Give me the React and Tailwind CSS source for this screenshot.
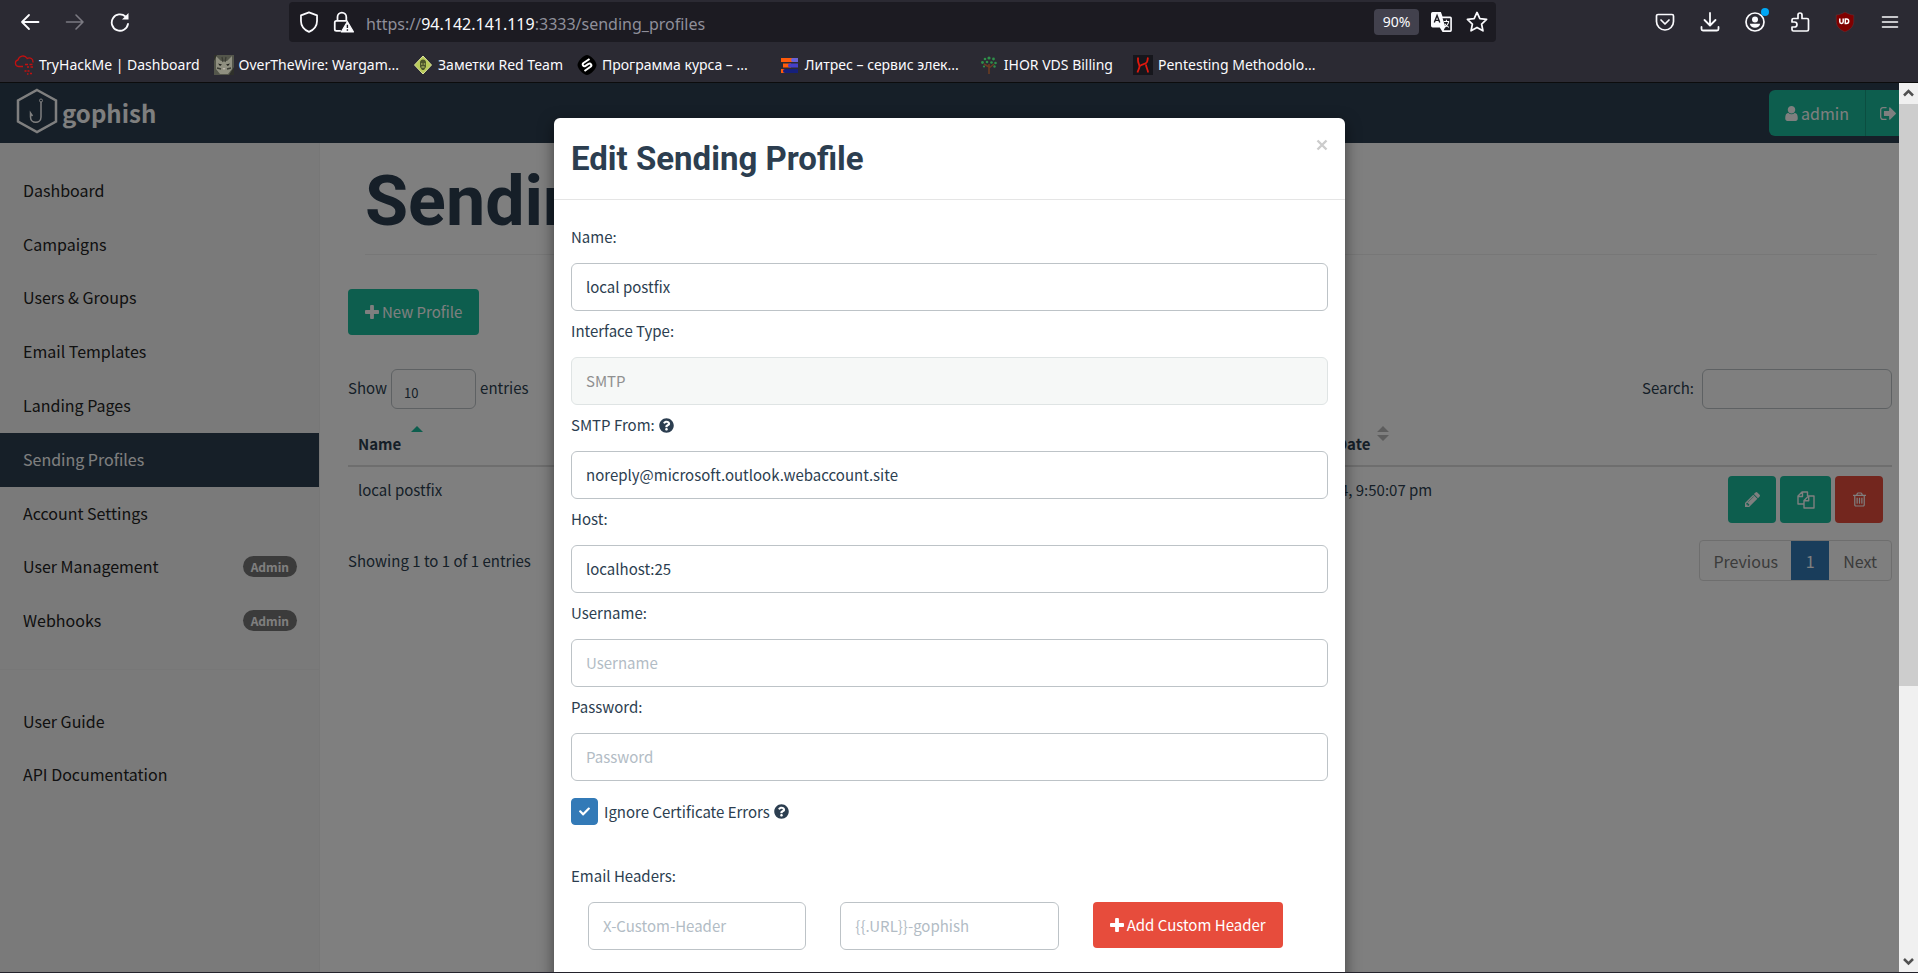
import React, { useState } from "react";
import { FaQuestionCircle, FaCheck } from "react-icons/fa";

const bookmarks = [
    { title: "TryHackMe | Dashboard", icon: CloudIcon, margin: "mr-3.5" },
    { title: "OverTheWire: Wargam...", icon: CatIcon, margin: "mr-3.5" },
    { title: "Заметки Red Team", icon: DiamondIcon, margin: "mr-3.5" },
    { title: "Программа курса – ...", icon: SkillIcon, margin: "mr-8" },
    { title: "Литрес – сервис элек...", icon: BooksIcon, margin: "mr-5" },
    { title: "IHOR VDS Billing", icon: TreeIcon, margin: "mr-5" },
    { title: "Pentesting Methodolo...", icon: HelixIcon, margin: "" },
];

const navItems = [
    { label: "Dashboard" },
    { label: "Campaigns" },
    { label: "Users & Groups" },
    { label: "Email Templates" },
    { label: "Landing Pages" },
    { label: "Sending Profiles", active: true },
    { label: "Account Settings" },
    { label: "User Management", admin: true },
    { label: "Webhooks", admin: true },
];

function CloudIcon() {
    return (
        <svg viewBox="0 0 20 20" className="h-5 w-5" fill="none" stroke="#c11111" strokeWidth="1.3">
            <path d="M9 11.500H4.500A3.300 3.300 0 0 1 4 5 5 5 0 0 1 13.200 3.500 3.700 3.700 0 0 1 18.800 7.500" />
            <path d="M11 9.500h3M15.500 9.500h3M13 12h2M16.500 12h2.500M10.500 16h2M13.500 16h2M13 19h1.500M16 18.500h2" strokeWidth="1.5" />
        </svg>
    );
}

function CatIcon() {
    return (
        <svg viewBox="0 0 20 20" className="h-5 w-5">
            <rect width="20" height="20" fill="#54564b" />
            <path d="M2 1l5 5h6l5-5v13l-4 5H6l-4-5z" fill="#8f8f80" />
            <path d="M8 2l1 5M12 2l-1 5M3 13l4 1M17 13l-4 1" stroke="#3b3c35" strokeWidth="1.3" />
            <path d="M4 8.500l4 1-2 1.500zM16 8.500l-4 1 2 1.500z" fill="#1f201c" />
            <path d="M8.500 13h3l-1.500 2z" fill="#c0b9ae" />
            <path d="M0 0h3L0 6zM20 12v8h-5z" fill="#2f302a" />
        </svg>
    );
}

function DiamondIcon() {
    return (
        <svg viewBox="0 0 20 20" className="h-5 w-5">
            <path d="M10 1l8.500 9-8.500 9-8.500-9z" fill="#b9cb5a" stroke="#dbe39b" />
            <path d="M7 6.500a3.300 3.300 0 0 1 6 0V12l-2 3H9l-2-3z" fill="#4c552b" />
            <path d="M8 9h1.500M10.700 9h1.500M8.500 12h3" stroke="#c9d778" />
        </svg>
    );
}

function SkillIcon() {
    return (
        <svg viewBox="0 0 20 20" className="h-5 w-5">
            <path d="M10 0c3 0 9.500 6 9.500 10S13 20 10 20 .5 14 .5 10 7 0 10 0z" fill="#000" />
            <path
                d="M12.500 4L6.500 8c-2 1.500 0 4 2 2.800l3-1.900c2-1.200 4 1.300 2 2.900L7.500 16"
                fill="none"
                stroke="#fff"
                strokeWidth="2"
            />
        </svg>
    );
}

function BooksIcon() {
    return (
        <svg viewBox="0 0 20 20" className="h-5 w-5">
            <path d="M1 3h12v4H1z" fill="#ff5a0a" />
            <path d="M13 3h5v4h-5a2 2 0 0 1 0-4z" fill="#6a62d8" />
            <path d="M3 8.500h8v4H3z" fill="#ff5a0a" />
            <path d="M10 8.500h8v4h-8a2 2 0 0 1 0-4z" fill="#4640c8" />
            <path d="M1 14h5v4H1z" fill="#ff5a0a" />
            <path d="M5 14h13v4H5a2 2 0 0 1 0-4z" fill="#15207c" />
        </svg>
    );
}

function TreeIcon() {
    return (
        <svg viewBox="0 0 20 20" className="h-5 w-5">
            <path d="M10 19V9M10 13l5-4M10 12L5 9" stroke="#6b3c22" strokeWidth="1.6" fill="none" />
            <g fill="#2f8f4a">
                <circle cx="10" cy="3" r="1.6" />
                <circle cx="6" cy="4" r="1.3" />
                <circle cx="14.500" cy="4" r="1.4" />
                <circle cx="3.500" cy="7.500" r="1.4" />
                <circle cx="16.500" cy="8" r="1.3" />
                <circle cx="8" cy="7" r="1.3" />
                <circle cx="12.500" cy="7.500" r="1.3" />
                <circle cx="5" cy="11.500" r="1.1" />
                <circle cx="15.500" cy="11.500" r="1.2" />
            </g>
        </svg>
    );
}

function HelixIcon() {
    return (
        <svg viewBox="0 0 20 20" className="h-5 w-5">
            <rect width="20" height="20" fill="#16161c" />
            <path
                d="M5 2.500v3c0 2.500 1.500 4 1.500 6S5 15 4.500 17.500M7 11c2-2.500 6-1.500 7-4 .8-2 .5-3 1-4.500M13 9.500c0 3 2 5 2 8"
                fill="none"
                stroke="#e0180e"
                strokeWidth="1.8"
            />
        </svg>
    );
}

function PlusIcon() {
    return (
        <svg viewBox="192 128 1408 1408" className="h-[14px] w-[14px]" fill="currentColor">
            <path d="M1600 736v192q0 40-28 68t-68 28h-416v416q0 40-28 68t-68 28H800q-40 0-68-28t-28-68v-416H288q-40 0-68-28t-28-68V736q0-40 28-68t68-28h416V224q0-40 28-68t68-28h192q40 0 68 28t28 68v416h416q40 0 68 28t28 68z" />
        </svg>
    );
}

function UserIcon() {
    return (
        <svg viewBox="256 128 1280 1536" className="h-[15px] w-[13px]" fill="currentColor">
            <path d="M1536 1399q0 109-62.500 187t-150.500 78h-854q-88 0-150.500-78T256 1399q0-85 8.500-160.500t31.500-152 58.500-131 94-89T583 832q131 128 313 128t313-128q76 0 134.500 34.500t94 89 58.500 131 31.500 152 8.500 160.500zM1280 512q0 159-112.500 271.500T896 896 624.500 783.500 512 512t112.500-271.500T896 128t271.500 112.500T1280 512z" />
        </svg>
    );
}

function SignOutIcon() {
    return (
        <svg viewBox="64 256 1568 1280" className="h-[13px] w-4" fill="currentColor">
            <path d="M704 1440q0 4 1 20t.5 26.500-3 23.500-10 19.500T672 1536H352q-119 0-203.500-84.500T64 1248V544q0-119 84.500-203.500T352 256h320q13 0 22.500 9.500T704 288q0 4 1 20t.5 26.500-3 23.500-10 19.500T672 384H352q-66 0-113 47t-47 113v704q0 66 47 113t113 47h312l11.500 1 11.500 3 8 5.500 7 9 2 13.500zm928-544q0 26-19 45l-544 544q-19 19-45 19t-45-19-19-45v-288H512q-26 0-45-19t-19-45V704q0-26 19-45t45-19h448V352q0-26 19-45t45-19 45 19l544 544q19 19 19 45z" />
        </svg>
    );
}

function PencilIcon() {
    return (
        <svg viewBox="128 149 1515 1515" className="h-[15px] w-[15px]" fill="currentColor">
            <path d="M491 1536l91-91-235-235-91 91v107h128v128h107zm523-928q0-22-22-22-10 0-17 7l-542 542q-7 7-7 17 0 22 22 22 10 0 17-7l542-542q7-7 7-17zm-54-192l416 416-832 832H128v-416zm683 96q0 53-37 90l-166 166-416-416 166-165q36-38 90-38 53 0 91 38l235 234q37 39 37 91z" />
        </svg>
    );
}

function CopyIcon() {
    return (
        <svg viewBox="0 0 18 18" className="h-[18px] w-[18px]" fill="none" stroke="currentColor" strokeWidth="1.4" strokeLinejoin="round">
            <path d="M7 13H1V5l4-4h5.500v4M1 5.500h4.500V1M7 17V9.500L11.500 5H17v12zM7 9.800h4.700V5" />
        </svg>
    );
}

function TrashIcon() {
    return (
        <svg viewBox="192 128 1408 1536" className="h-[15px] w-[13px]" fill="currentColor">
            <path d="M704 736v576q0 14-9 23t-23 9h-64q-14 0-23-9t-9-23V736q0-14 9-23t23-9h64q14 0 23 9t9 23zm256 0v576q0 14-9 23t-23 9h-64q-14 0-23-9t-9-23V736q0-14 9-23t23-9h64q14 0 23 9t9 23zm256 0v576q0 14-9 23t-23 9h-64q-14 0-23-9t-9-23V736q0-14 9-23t23-9h64q14 0 23 9t9 23zm128 724V512H448v948q0 22 7 40.500t14.500 27 10.500 8.500h832q3 0 10.500-8.500t14.500-27 7-40.500zM672 384h448l-48-117q-7-9-17-11H738q-10 2-17 11zm928 32v64q0 14-9 23t-23 9h-96v948q0 83-47 143.500t-113 60.500H480q-66 0-113-58.500T320 1464V512h-96q-14 0-23-9t-9-23v-64q0-14 9-23t23-9h309l70-167q15-37 54-63t79-26h320q40 0 79 26t54 63l70 167h309q14 0 23 9t9 23z" />
        </svg>
    );
}

function BrowserToolbar() {
    return (
        <div className="flex h-11 items-center">
            <div className="flex w-[289px] shrink-0 items-center gap-[25px] pl-5">
                <button type="button" aria-label="Back" className="text-[#fbfbfe]">
                    <svg viewBox="0 0 20 20" className="h-5 w-5" fill="none" stroke="currentColor" strokeWidth="1.8" strokeLinecap="round" strokeLinejoin="round">
                        <path d="M18.500 10H2M9 3l-7 7 7 7" />
                    </svg>
                </button>
                <button type="button" aria-label="Forward" className="text-[#7b7a82]">
                    <svg viewBox="0 0 20 20" className="h-5 w-5" fill="none" stroke="currentColor" strokeWidth="1.6" strokeLinecap="round" strokeLinejoin="round">
                        <path d="M1.500 10H18M11 3l7 7-7 7" />
                    </svg>
                </button>
                <button type="button" aria-label="Reload" className="text-[#fbfbfe]">
                    <svg viewBox="0 0 20 20" className="h-5 w-5" fill="none" stroke="currentColor" strokeWidth="1.8" strokeLinecap="round">
                        <path d="M18 12a8.200 8.200 0 1 1-2.500-7.500" />
                        <path d="M18.500 1v6.500H12z" fill="currentColor" stroke="none" />
                    </svg>
                </button>
            </div>

            <div className="flex h-10 flex-1 items-center rounded bg-[#1c1b22] pr-2 pl-[9px] text-[#fbfbfe]">
                <svg viewBox="0 0 20 20" className="mr-3 h-[22px] w-[22px]" fill="none" stroke="currentColor" strokeWidth="1.6" strokeLinejoin="round">
                    <path d="M10 1.200l7.300 2.800v5c0 4.500-3 8-7.300 10-4.300-2-7.300-5.500-7.300-10V4z" />
                </svg>
                <svg viewBox="0 0 20 20" className="mr-3 h-[22px] w-[22px]" fill="none" stroke="currentColor" strokeWidth="1.6">
                    <path d="M5 9V5.500a4 4 0 0 1 8 0V9M8 18H4a1.500 1.500 0 0 1-1.500-1.500v-6A1.500 1.500 0 0 1 4 9h10" />
                    <path d="M14 9.500l5.500 9.500h-11z" fill="currentColor" strokeLinejoin="round" strokeWidth="1" />
                    <path d="M14 12.500v3M14 16.700v1.200" stroke="#1c1b22" strokeWidth="1.3" />
                </svg>
                <label className="flex flex-1 pt-[3px] text-base leading-6 text-[#8f8f9a]">
                    <span>
                        https://<span className="text-[#fbfbfe]">94.142.141.119</span>:3333/sending_profiles
                    </span>
                    <input type="text" className="flex-1 bg-transparent outline-none" />
                </label>
                <button type="button" className="mr-3 h-[26px] w-[45px] rounded bg-[#42414d] text-sm">
                    90%
                </button>
                <button type="button" aria-label="Translate page" className="mr-[13px]">
                    <svg viewBox="0 0 20 20" className="h-[22px] w-[22px]">
                        <path d="M1.500 1H9l1.500 4h7a1.500 1.500 0 0 1 1.500 1.500v11a1.500 1.500 0 0 1-1.500 1.500h-7L8 15H1.500A1.500 1.500 0 0 1 0 13.500v-11A1.500 1.500 0 0 1 1.500 1z" fill="#fbfbfe" />
                        <path d="M10.500 6.500h7v11h-6l1.500-3z" fill="#1c1b22" />
                        <path d="M3 10.500L5.500 4 8 10.500M4 8.500h3" stroke="#1c1b22" strokeWidth="1.3" fill="none" />
                        <path d="M11.500 9.500h5M14 8v1.500M16 10c-.5 2.500-2 4-4 5M12.500 11.500c.7 1.500 2 2.700 3.800 3.200" stroke="#fbfbfe" fill="none" />
                    </svg>
                </button>
                <button type="button" aria-label="Bookmark page">
                    <svg viewBox="0 0 20 20" className="h-[22px] w-[22px]" fill="none" stroke="currentColor" strokeWidth="1.6" strokeLinejoin="round">
                        <path d="M10 1.300l2.600 5.600 6.100.8-4.500 4.200 1.200 6.100-5.400-3-5.400 3 1.200-6.100L1.300 7.700l6.100-.8z" />
                    </svg>
                </button>
            </div>

            <div className="flex w-[422px] shrink-0 items-center justify-end gap-[25px] pr-[18px] text-[#fbfbfe]">
                <button type="button" aria-label="Pocket">
                    <svg viewBox="0 0 20 20" className="h-5 w-5" fill="none" stroke="currentColor" strokeWidth="1.7" strokeLinecap="round" strokeLinejoin="round">
                        <path d="M3 2.500h14A1.500 1.500 0 0 1 18.500 4v5.500a8.500 8.500 0 0 1-17 0V4A1.500 1.500 0 0 1 3 2.500z" />
                        <path d="M6 8l4 4 4-4" />
                    </svg>
                </button>
                <button type="button" aria-label="Downloads">
                    <svg viewBox="0 0 20 20" className="h-5 w-5" fill="none" stroke="currentColor" strokeWidth="1.8" strokeLinecap="round" strokeLinejoin="round">
                        <path d="M10 1v12M4.500 8l5.500 5.500L15.500 8M1.500 15v2A1.500 1.500 0 0 0 3 18.500h14a1.500 1.500 0 0 0 1.500-1.500v-2" />
                    </svg>
                </button>
                <button type="button" aria-label="Account" className="relative">
                    <svg viewBox="0 0 20 20" className="h-5 w-5" fill="none" stroke="currentColor" strokeWidth="1.7">
                        <circle cx="10" cy="10" r="9" />
                        <circle cx="10" cy="7.500" r="3" fill="currentColor" stroke="none" />
                        <path d="M4.800 11.700h10.400c-.5 2.500-2.600 4-5.200 4s-4.700-1.500-5.200-4z" fill="currentColor" stroke="none" />
                    </svg>
                    <span className="absolute -top-1 -right-1 h-2 w-2 rounded-full bg-[#00a8f5]" />
                </button>
                <button type="button" aria-label="Extensions">
                    <svg viewBox="0 0 20 20" className="h-5 w-5" fill="none" stroke="currentColor" strokeWidth="1.7" strokeLinejoin="round">
                        <path d="M2 10V8a1.500 1.500 0 0 1 1.500-1.500H8V3a2 2 0 0 1 4 0v3.500h5A1.500 1.500 0 0 1 18.500 8v9.500A1.500 1.500 0 0 1 17 19H3.500A1.500 1.500 0 0 1 2 17.500V15h2.500a2.500 2.500 0 0 0 0-5z" />
                    </svg>
                </button>
                <button type="button" aria-label="uBlock Origin">
                    <svg viewBox="0 0 20 20" className="h-5 w-5">
                        <path d="M10 0c3 1.800 5.500 2.700 8.800 3v6c0 5-3 8.500-8.800 11C4.200 17.500 1.200 14 1.200 9V3C4.500 2.700 7 1.800 10 0z" fill="#800000" stroke="#5a3a40" strokeWidth=".5" />
                        <path d="M4.800 6.500v3.300a1.700 1.700 0 0 0 3.400 0V6.500M10.300 7h1.200a2.200 2.200 0 0 1 0 4.400h-1.200z" fill="none" stroke="#fff" strokeWidth="1.5" />
                    </svg>
                </button>
                <button type="button" aria-label="Menu">
                    <svg viewBox="0 0 20 20" className="h-5 w-5" stroke="currentColor" strokeWidth="1.6" strokeLinecap="round">
                        <path d="M2.500 5h15M2.500 10h15M2.500 15h15" />
                    </svg>
                </button>
            </div>
        </div>
    );
}

function BookmarksBar() {
    return (
        <div className="flex h-[38px] items-center pt-1 pl-[14px]">
            {bookmarks.map((item) => {
                const Icon = item.icon;
                return (
                    <a
                        key={item.title}
                        href="#"
                        className={`flex items-center gap-[5px] text-sm whitespace-nowrap text-[#fbfbfe] ${item.margin}`}
                    >
                        <Icon />
                        {item.title}
                    </a>
                );
            })}
        </div>
    );
}

function Navbar() {
    return (
        <nav className="flex h-[60px] shrink-0 justify-between bg-[#2c3e50]">
            <a href="#" className="flex items-center gap-1 pb-1 pl-4 text-2xl font-bold text-white">
                <svg viewBox="0 0 42 46" className="h-[46px] w-[42px]" fill="none" stroke="currentColor">
                    <path d="M21 2l19 10.500v21L21 44 2 33.500v-21z" strokeWidth="2.5" />
                    <circle cx="25" cy="12.500" r="1.5" />
                    <path d="M25 14v15c0 7-10.500 7-10.500 0v-4l2 3" strokeWidth="1.5" />
                </svg>
                <span className="pt-1">gophish</span>
            </a>
            <div className="flex items-center">
                <button type="button" className="flex h-[46px] items-center gap-[3px] rounded-l-md bg-[#1abc9c] px-4 text-base text-white">
                    <UserIcon />
                    admin
                </button>
                <button type="button" aria-label="Log out" className="h-[46px] border-l border-[#179c82] bg-[#1abc9c] pr-[3px] pl-[14px] text-white">
                    <SignOutIcon />
                </button>
            </div>
        </nav>
    );
}

function Sidebar() {
    return (
        <aside className="w-80 shrink-0 border-r border-[#eeeeee] bg-[#f5f5f5] pt-[21px] text-base text-[#222222]">
            <ul className="flex h-[484px] flex-col">
                {navItems.map((item) => (
                    <li key={item.label} className="flex-1">
                        <a
                            href="#"
                            className={`flex h-full items-center justify-between pr-[22px] pb-[2px] pl-[23px] ${item.active ? "bg-[#2c3e50] text-white" : ""
                                }`}
                        >
                            {item.label}
                            {item.admin && (
                                <span className="rounded-full bg-[#777777] px-2 text-xs leading-[21px] font-bold text-white">
                                    Admin
                                </span>
                            )}
                        </a>
                    </li>
                ))}
            </ul>
            <ul className="mt-[21px] border-t border-[#eeeeee] pt-6">
                <li>
                    <a href="#" className="flex h-[53px] items-center pl-[23px]">User Guide</a>
                </li>
                <li>
                    <a href="#" className="flex h-[53px] items-center pl-[23px]">API Documentation</a>
                </li>
            </ul>
        </aside>
    );
}

function ProfilesPage() {
    return (
        <main className="flex-1 bg-white pr-[7px] pl-7 text-[15px] leading-[22px] text-[#2c3e50]">
            <h1 className="mr-[15px] ml-[17px] border-b border-[#eeeeee] pt-[21px] pb-[15px] font-[Roboto] text-[70px] leading-[75px] font-bold">
                Sending Profiles
            </h1>
            <button type="button" className="mt-[34px] flex h-[46px] items-center gap-[3px] rounded bg-[#1abc9c] px-[17px] text-white">
                <PlusIcon />
                New Profile
            </button>

            <div className="mt-[34px] flex items-center justify-between">
                <label className="flex items-center gap-1">
                    <span className="pb-[3px]">Show</span>
                    <select className="h-10 w-[85px] appearance-none rounded-md border border-[#bdc3c7] bg-white pt-2 pl-3 text-[13px]">
                        <option>10</option>
                    </select>
                    <span className="pb-[3px]">entries</span>
                </label>
                <label className="flex items-center gap-2">
                    <span className="pb-[3px]">Search:</span>
                    <input type="search" className="h-10 w-[190px] rounded-md border border-[#bdc3c7] bg-white px-3" />
                </label>
            </div>

            <table className="mt-[6px] w-full table-fixed text-left">
                <thead>
                    <tr className="h-[51px] border-b-2 border-[#dddddd] align-bottom">
                        <th className="w-[29%] pb-[10px] pl-[10px] font-bold">
                            <span className="flex items-start gap-[10px]">
                                Name
                                <svg viewBox="0 0 12 16" className="-mt-2 h-4 w-3" fill="#1abc9c">
                                    <path d="M0 7l6-6 6 6z" />
                                </svg>
                            </span>
                        </th>
                        <th className="w-[428px] pb-[10px] pl-[10px] font-bold">Interface Type</th>
                        <th className="pb-[10px] pl-[10px] font-bold">
                            <span className="flex items-start gap-[7px]">
                                Last Modified Date
                                <svg viewBox="0 0 12 16" className="-mt-2 h-4 w-3" fill="#bbbbbb">
                                    <path d="M0 7l6-6 6 6zM0 10h12l-6 6z" />
                                </svg>
                            </span>
                        </th>
                        <th className="w-[180px]"></th>
                    </tr>
                </thead>
                <tbody>
                    <tr className="align-top">
                        <td className="pt-3 pl-[10px]">local postfix</td>
                        <td className="pt-3 pl-[10px]">SMTP</td>
                        <td className="pt-3 pl-[10px]">March 20th 2024, 9:50:07 pm</td>
                        <td className="pt-[9px] pr-[9px]">
                            <div className="flex justify-end gap-1 text-white">
                                <button type="button" aria-label="Edit" className="flex h-[47px] w-12 items-center justify-center rounded bg-[#1abc9c]">
                                    <PencilIcon />
                                </button>
                                <button type="button" aria-label="Copy" className="flex h-[47px] w-[51px] items-center justify-center rounded bg-[#1abc9c]">
                                    <CopyIcon />
                                </button>
                                <button type="button" aria-label="Delete" className="flex h-[47px] w-12 items-center justify-center rounded bg-[#e74c3c]">
                                    <TrashIcon />
                                </button>
                            </div>
                        </td>
                    </tr>
                </tbody>
            </table>

            <div className="mt-[17px] flex items-center justify-between">
                <p>Showing 1 to 1 of 1 entries</p>
                <div className="flex h-[41px] overflow-hidden rounded border border-[#dddddd] text-base text-[#777777]">
                    <button type="button" className="px-[13px]">Previous</button>
                    <button type="button" className="w-[38px] bg-[#337ab7] text-white">1</button>
                    <button type="button" className="px-[14px]">Next</button>
                </div>
            </div>
        </main>
    );
}

const inputStyle =
    "block h-12 w-full rounded-md border border-[#bdc3c7] bg-white px-[14px] pb-[2px] placeholder:text-[#b2bcc5] disabled:border-[#dfe4e4] disabled:bg-[#f6f8f7] disabled:text-[#909090]";

function EditProfileModal() {
    const [profile, setProfile] = useState({
        name: "local postfix",
        interfaceType: "SMTP",
        from: "noreply@microsoft.outlook.webaccount.site",
        host: "localhost:25",
        username: "",
        password: "",
    });
    const [ignoreCert, setIgnoreCert] = useState(true);

    const fields = [
        { name: "name", label: "Name:" },
        { name: "interfaceType", label: "Interface Type:", disabled: true },
        { name: "from", label: "SMTP From:", help: true },
        { name: "host", label: "Host:" },
        { name: "username", label: "Username:", placeholder: "Username" },
        { name: "password", label: "Password:", placeholder: "Password", type: "password" },
    ];

    const handleChange = (e) => {
        const { name, value } = e.target;
        setProfile((prev) => ({ ...prev, [name]: value }));
    };

    return (
        <div
            role="dialog"
            aria-labelledby="modalTitle"
            className="mx-4 h-max w-full max-w-[791px] rounded-md bg-white text-[15px] leading-[22px] text-[#2c3e50] shadow-[0_5px_15px_rgba(0,0,0,0.5)]"
        >
            <div className="flex items-start justify-between border-b border-[#e5e5e5] px-[17px] py-5">
                <h4 id="modalTitle" className="font-[Roboto] text-[33px] leading-[41px] font-bold">
                    Edit Sending Profile
                </h4>
                <button type="button" aria-label="Close" className="pt-px text-[#cccccc]">
                    <svg viewBox="0 0 12 12" className="h-3 w-3" stroke="currentColor" strokeWidth="2.4">
                        <path d="M1.500 1.500l9 9M10.500 1.500l-9 9" />
                    </svg>
                </button>
            </div>

            <form className="px-[17px] pt-[17px] pb-12">
                {fields.map((field) => (
                    <div key={field.name} className="pt-[9px]">
                        <label htmlFor={field.name} className="mb-[15px] flex items-center gap-1">
                            {field.label}
                            {field.help && <FaQuestionCircle className="h-[15px] w-[15px]" />}
                        </label>
                        <input
                            id={field.name}
                            name={field.name}
                            type={field.type || "text"}
                            value={profile[field.name]}
                            onChange={handleChange}
                            placeholder={field.placeholder}
                            disabled={field.disabled}
                            className={inputStyle}
                        />
                    </div>
                ))}

                <label className="mt-[17px] flex items-center gap-1">
                    <span className="relative mr-[2px] h-[27px] w-[27px]">
                        <input
                            type="checkbox"
                            checked={ignoreCert}
                            onChange={(e) => setIgnoreCert(e.target.checked)}
                            className="block h-[27px] w-[27px] appearance-none rounded-sm border border-[#337ab7] checked:bg-[#337ab7]"
                        />
                        {ignoreCert && (
                            <FaCheck className="pointer-events-none absolute inset-0 m-auto h-[11px] w-[11px] text-white" />
                        )}
                    </span>
                    Ignore Certificate Errors
                    <FaQuestionCircle className="h-[15px] w-[15px]" />
                </label>

                <p className="mt-10 mb-[15px]">Email Headers:</p>
                <div className="grid grid-cols-3">
                    <div className="px-[17px]">
                        <input type="text" aria-label="Header" placeholder="X-Custom-Header" className={inputStyle} />
                    </div>
                    <div className="px-[17px]">
                        <input type="text" aria-label="Value" placeholder="{{.URL}}-gophish" className={inputStyle} />
                    </div>
                    <div className="px-[17px]">
                        <button type="button" className="flex h-[46px] items-center gap-[3px] rounded bg-[#e74c3c] px-[17px] text-white">
                            <PlusIcon />
                            Add Custom Header
                        </button>
                    </div>
                </div>
            </form>
        </div>
    );
}

function Scrollbar() {
    return (
        <div className="flex w-[19px] shrink-0 flex-col bg-[#f0f0f0]">
            <svg viewBox="0 0 19 21" className="h-[21px] w-[19px]" fill="none" stroke="#505050" strokeWidth="2.5">
                <path d="M5 12.500L9.500 8l4.500 4.500" />
            </svg>
            <div className="flex-[11] bg-[#cdcdcd]" />
            <div className="flex-[5]" />
            <svg viewBox="0 0 19 21" className="h-[21px] w-[19px]" fill="none" stroke="#505050" strokeWidth="2.5">
                <path d="M5 8l4.500 4.500L14 8" />
            </svg>
        </div>
    );
}

export default function App() {
    return (
        <div className="flex h-screen flex-col overflow-hidden bg-[#2b2a33]">
            <header className="shrink-0 border-b border-[#0c0c0d] font-['Noto_Sans',sans-serif]">
                <BrowserToolbar />
                <BookmarksBar />
            </header>

            <div className="flex min-h-0 flex-1 border-b border-[#23222b] font-['Noto_Sans_CJK_SC',sans-serif]">
                <div className="relative flex min-w-0 flex-1 flex-col overflow-hidden">
                    <Navbar />
                    <div className="flex flex-1">
                        <Sidebar />
                        <ProfilesPage />
                    </div>
                    {/* Backdrop and dialog */}
                    <div className="absolute inset-0 flex justify-center bg-black/50 pt-[35px]">
                        <EditProfileModal />
                    </div>
                </div>
                <Scrollbar />
            </div>
        </div>
    );
}
